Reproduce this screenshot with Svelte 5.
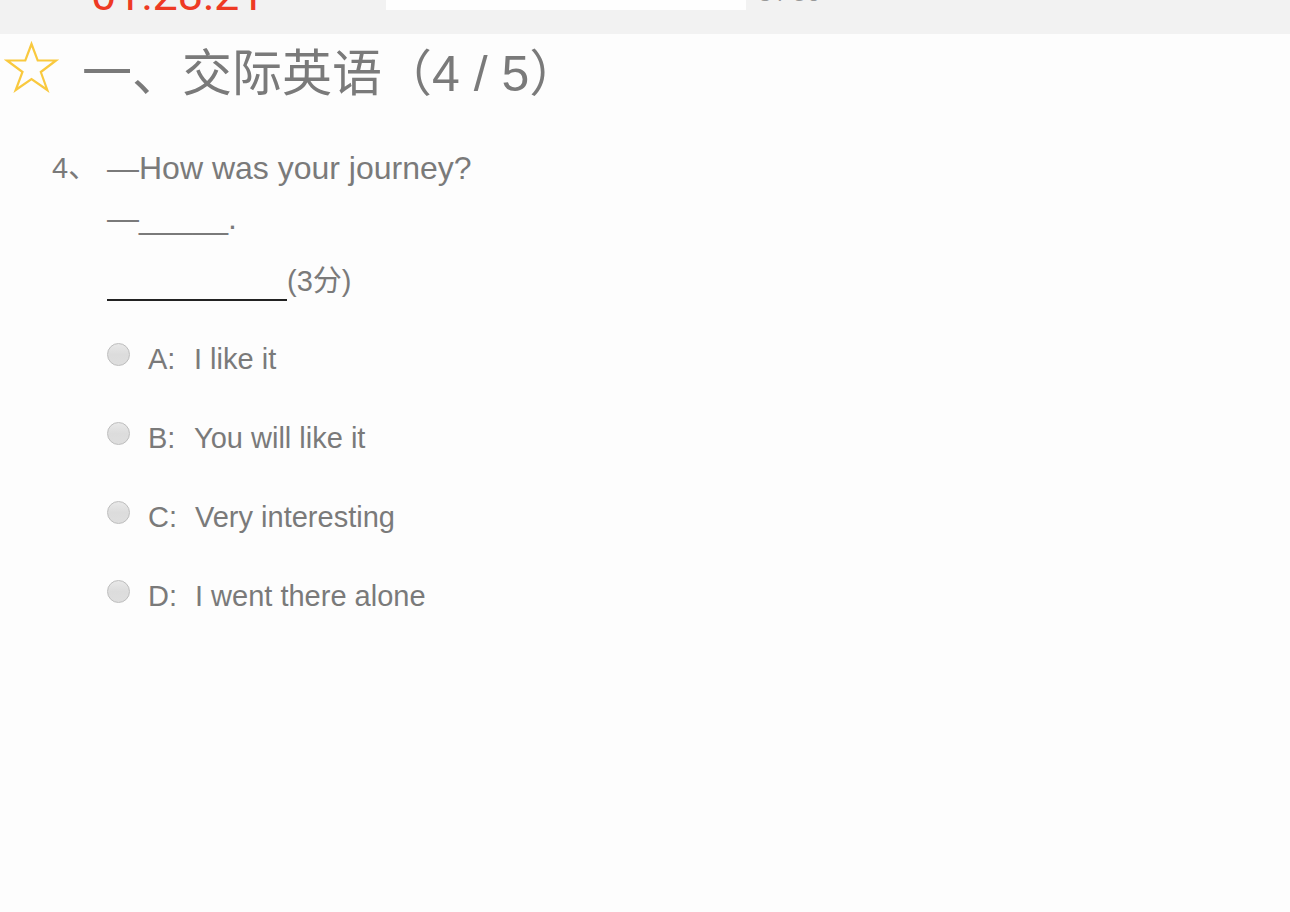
<script>
  const options = [
    { key: 'A', text: 'I like it' },
    { key: 'B', text: 'You will like it' },
    { key: 'C', text: 'Very interesting' },
    { key: 'D', text: 'I went there alone' },
  ];
  let answer = $state('');
</script>

<header class="topbar">
  <time class="timer">01:28:21</time>
  <div class="track"></div>
  <span class="count">3 / 50</span>
</header>

<main>
  <div class="heading">
    <button class="star" aria-label="收藏">
      <svg viewBox="0 0 56 56" width="56" height="56" fill="none" stroke="#f9c93f" stroke-width="2.2">
        <path d="M27.5 6 L33.7 22.5 L52 22.5 L36.8 34 L43.3 52 L27.5 41 L11.7 52 L18.5 34 L3 22.5 L21.3 22.5 Z" />
      </svg>
    </button>
    <h1>一、交际英语（4 / 5）</h1>
  </div>

  <section class="question">
    <span class="number">4、</span>
    <div class="body">
      <p class="stem">—How was your journey?<br />—_____.</p>
      <p class="score"><span class="blank"></span>(3分)</p>
      <div class="options" role="radiogroup" aria-label="4">
        {#each options as option}
          <label>
            <input type="radio" name="answer" value={option.key} bind:group={answer} />
            <span class="key">{option.key}:</span>
            <span>{option.text}</span>
          </label>
        {/each}
      </div>
    </div>
  </section>
</main>

<style>
  :global(body) {
    background: #fdfdfd;
  }

  .topbar,
  main {
    font-family: "Liberation Sans", Arial, "Noto Sans CJK SC", sans-serif;
    color: #7a7a7a;
  }

  .topbar {
    display: flex;
    align-items: flex-end;
    box-sizing: border-box;
    height: 34px;
    padding: 0 0 14px 91px;
    overflow: hidden;
    background: #f2f2f2;
  }

  .timer {
    flex: none;
    width: 295px;
    font-family: Roboto, "Liberation Sans", sans-serif;
    font-size: 45px;
    line-height: 50px;
    color: #ee3a24;
  }

  .track {
    flex: none;
    width: 360px;
    height: 40px;
    margin-bottom: 10px;
    background: #fefefe;
  }

  .count {
    margin: 0 0 12px 12px;
    font-size: 25px;
    line-height: 32px;
    color: #999;
    white-space: nowrap;
  }

  .heading {
    display: flex;
    align-items: flex-start;
    gap: 22px;
    padding: 2px 4px 0;
  }

  .star {
    flex: none;
    width: 56px;
    height: 56px;
    margin-top: 2px;
    padding: 0;
    border: 0;
    background: none;
    cursor: pointer;
  }

  .star svg {
    display: block;
  }

  h1 {
    margin: 0;
    font-size: 50px;
    font-weight: 400;
    line-height: 76px;
  }

  .question {
    display: flex;
    padding: 31px 24px 0 52px;
    font-size: 29px;
  }

  .number {
    flex: none;
    width: 55px;
    line-height: 50px;
  }

  .body {
    flex: 1;
  }

  p {
    margin: 0;
  }

  .stem {
    font-size: 32px;
    line-height: 50px;
  }

  .score {
    display: flex;
    align-items: flex-end;
    margin-top: 16px;
    line-height: 40px;
  }

  .blank {
    width: 180px;
    height: 40px;
    border-bottom: 2px solid #222;
  }

  .options {
    display: flex;
    flex-direction: column;
    align-items: flex-start;
    gap: 39px;
    margin-top: 38px;
  }

  label {
    display: flex;
    line-height: 40px;
    cursor: pointer;
  }

  .key {
    min-width: 28px;
    margin-right: 18px;
  }

  input {
    appearance: none;
    box-sizing: border-box;
    width: 23px;
    height: 23px;
    margin: 4px 18px 0 0;
    border: 1px solid #bdbdbd;
    border-radius: 50%;
    background: linear-gradient(#e8e8e8, #dcdcdc 50%, #dedede);
  }

  input:checked {
    background: radial-gradient(circle, #555 35%, #dedede 40%);
  }
</style>
